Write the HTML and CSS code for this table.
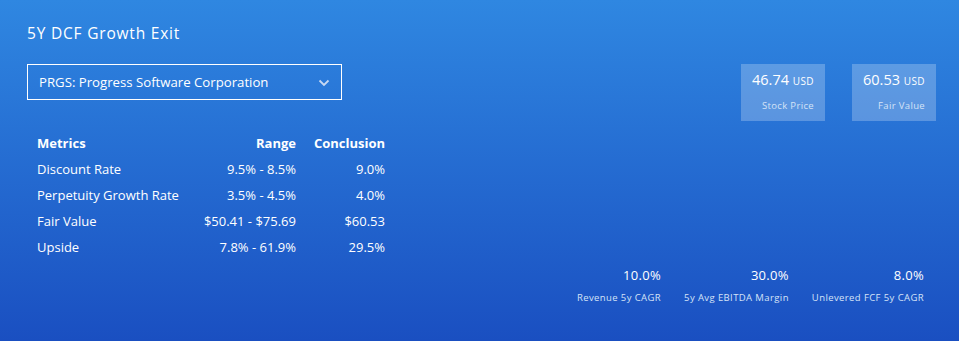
FILE: index.html
```html
<!DOCTYPE html>
<html>
<head>
<meta charset="utf-8">
<link rel="stylesheet" href="styles.css">
</head>
<body>
<div class="panel">
  <h1 class="title">5Y DCF Growth Exit</h1>
  <div class="top">
    <div class="left">
      <div class="select">
        <span>PRGS: Progress Software Corporation</span>
        <svg class="chev" width="12" height="8" viewBox="0 0 12 8"><path d="M1.5 1.5 L6 6 L10.5 1.5" fill="none" stroke="#c7d8f2" stroke-width="1.8"/></svg>
      </div>
      <div class="table">
        <div class="th">Metrics</div><div class="th r">Range</div><div class="th r">Conclusion</div>
        <div>Discount Rate</div><div class="r">9.5% - 8.5%</div><div class="r">9.0%</div>
        <div>Perpetuity Growth Rate</div><div class="r">3.5% - 4.5%</div><div class="r">4.0%</div>
        <div>Fair Value</div><div class="r">$50.41 - $75.69</div><div class="r">$60.53</div>
        <div>Upside</div><div class="r">7.8% - 61.9%</div><div class="r">29.5%</div>
      </div>
    </div>
    <div class="cards">
      <div class="card"><div class="val">46.74 <span class="cur">USD</span></div><div class="lbl">Stock Price</div></div>
      <div class="card"><div class="val">60.53 <span class="cur">USD</span></div><div class="lbl">Fair Value</div></div>
    </div>
  </div>
  <div class="stats">
    <div class="stat"><div class="sv">10.0%</div><div class="sl">Revenue 5y CAGR</div></div>
    <div class="stat"><div class="sv">30.0%</div><div class="sl">5y Avg EBITDA Margin</div></div>
    <div class="stat"><div class="sv">8.0%</div><div class="sl">Unlevered FCF 5y CAGR</div></div>
  </div>
</div>
</body>
</html>
```

FILE: styles.css
```css
html, body {
  margin: 0;
  padding: 0;
}
body {
  font-family: "Open Sans", "Liberation Sans", sans-serif;
  color: #ffffff;
  background: linear-gradient(180deg, #2f87e1 0%, #1a4fc1 100%);
  min-height: 341px;
}
.panel {
  height: 341px;
  box-sizing: border-box;
  padding: 22px 23px 0 27px;
}
.title {
  margin: 0;
  font-size: 15.5px;
  font-weight: 400;
  line-height: 22px;
  letter-spacing: 0.8px;
}
.top {
  display: flex;
  justify-content: space-between;
  margin-top: 20px;
}
.select {
  width: 315px;
  height: 36px;
  box-sizing: border-box;
  border: 1px solid #ffffff;
  display: flex;
  align-items: center;
  justify-content: space-between;
  padding: 0 11px 0 11px;
  font-size: 13.2px;
}
.chev {
  margin-top: 1px;
}
.table {
  display: grid;
  grid-template-columns: 150px 109px 89px;
  grid-auto-rows: 26px;
  align-items: center;
  margin: 30px 0 0 10px;
  font-size: 13px;
}
.th {
  font-weight: 700;
}
.r {
  text-align: right;
}
.cards {
  display: flex;
  gap: 27px;
  align-items: flex-start;
}
.card {
  background: rgba(255, 255, 255, 0.24);
  height: 57px;
  box-sizing: border-box;
  padding: 6px 11px 0 11px;
  text-align: right;
  min-width: 81px;
}
.val {
  font-size: 14.5px;
  line-height: 20px;
}
.cur {
  font-size: 10px;
  letter-spacing: 0.4px;
}
.lbl {
  font-size: 9.5px;
  margin-top: 8px;
  letter-spacing: 0.35px;
  color: #d5e3f7;
}
.stats {
  display: flex;
  justify-content: flex-end;
  gap: 23px;
  margin-top: 6px;
  padding-right: 12px;
}
.stat {
  display: flex;
  flex-direction: column;
  align-items: flex-end;
}
.sv {
  font-size: 13px;
  line-height: 18px;
  letter-spacing: 0.3px;
}
.sl {
  font-size: 9.5px;
  margin-top: 7px;
  letter-spacing: 0.4px;
  color: #d5e3f7;
}
```
